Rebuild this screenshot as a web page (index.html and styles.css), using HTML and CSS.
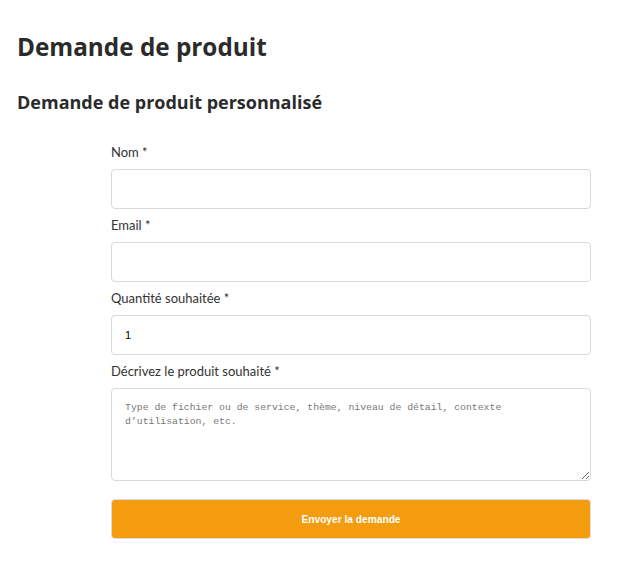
FILE: index.html
```html
<!DOCTYPE html>
<html lang="fr">
<head>
<meta charset="utf-8">
<title>Demande de produit</title>
<link rel="stylesheet" href="styles.css">
</head>
<body>
<main class="page">
  <h1 class="title">Demande de produit</h1>
  <h2 class="subtitle">Demande de produit personnalisé</h2>
  <form class="form">
    <div class="field">
      <label class="label" for="nom">Nom *</label>
      <input class="input" id="nom" type="text">
    </div>
    <div class="field">
      <label class="label" for="email">Email *</label>
      <input class="input" id="email" type="email">
    </div>
    <div class="field">
      <label class="label" for="qte">Quantité souhaitée *</label>
      <input class="input" id="qte" type="text" value="1">
    </div>
    <div class="field">
      <label class="label" for="desc">Décrivez le produit souhaité *</label>
      <textarea class="textarea" id="desc" placeholder="Type de fichier ou de service, thème, niveau de détail, contexte d’utilisation, etc."></textarea>
    </div>
    <button class="submit" type="button">Envoyer la demande</button>
  </form>
</main>
</body>
</html>
```

FILE: styles.css
```css
html, body {
  margin: 0;
  padding: 0;
  background: #ffffff;
}

.page {
  padding: 31px 17px 20px 17px;
  font-family: "Open Sans", "Noto Sans", sans-serif;
  color: #333333;
}

.title {
  margin: 0;
  font-size: 24.3px;
  line-height: 32px;
  font-weight: 700;
  color: #2b2b2b;
}

.subtitle {
  margin: 27px 0 0 0;
  font-size: 18px;
  line-height: 24px;
  font-weight: 700;
  color: #2b2b2b;
}

.form {
  margin: 30px 0 0 94px;
  width: 480px;
  display: flex;
  flex-direction: column;
  gap: 8px;
}

.field {
  display: flex;
  flex-direction: column;
  gap: 8px;
}

.label {
  font-family: "Lato", "Open Sans", sans-serif;
  font-size: 13px;
  line-height: 17px;
  color: #333333;
}

.input,
.textarea {
  box-sizing: border-box;
  width: 480px;
  margin: 0;
  border: 1px solid #d9d9d9;
  border-radius: 4px;
  background: #ffffff;
  padding: 0 13px;
  outline: none;
}

.input {
  height: 40px;
  font-family: "Liberation Sans", Arial, sans-serif;
  font-size: 11px;
  color: #000000;
}

.textarea {
  height: 93px;
  padding: 12px 13px;
  font-family: "Liberation Mono", monospace;
  font-size: 9.8px;
  line-height: 14px;
  resize: vertical;
}

.textarea::placeholder {
  color: #777777;
}

.submit {
  margin-top: 10px;
  box-sizing: border-box;
  width: 480px;
  height: 40px;
  border: 1px solid #dddddd;
  border-radius: 4px;
  background: #f39c0f;
  color: #ffffff;
  font-family: "Liberation Sans", Arial, sans-serif;
  font-size: 10.2px;
  font-weight: 700;
  cursor: pointer;
}
```
